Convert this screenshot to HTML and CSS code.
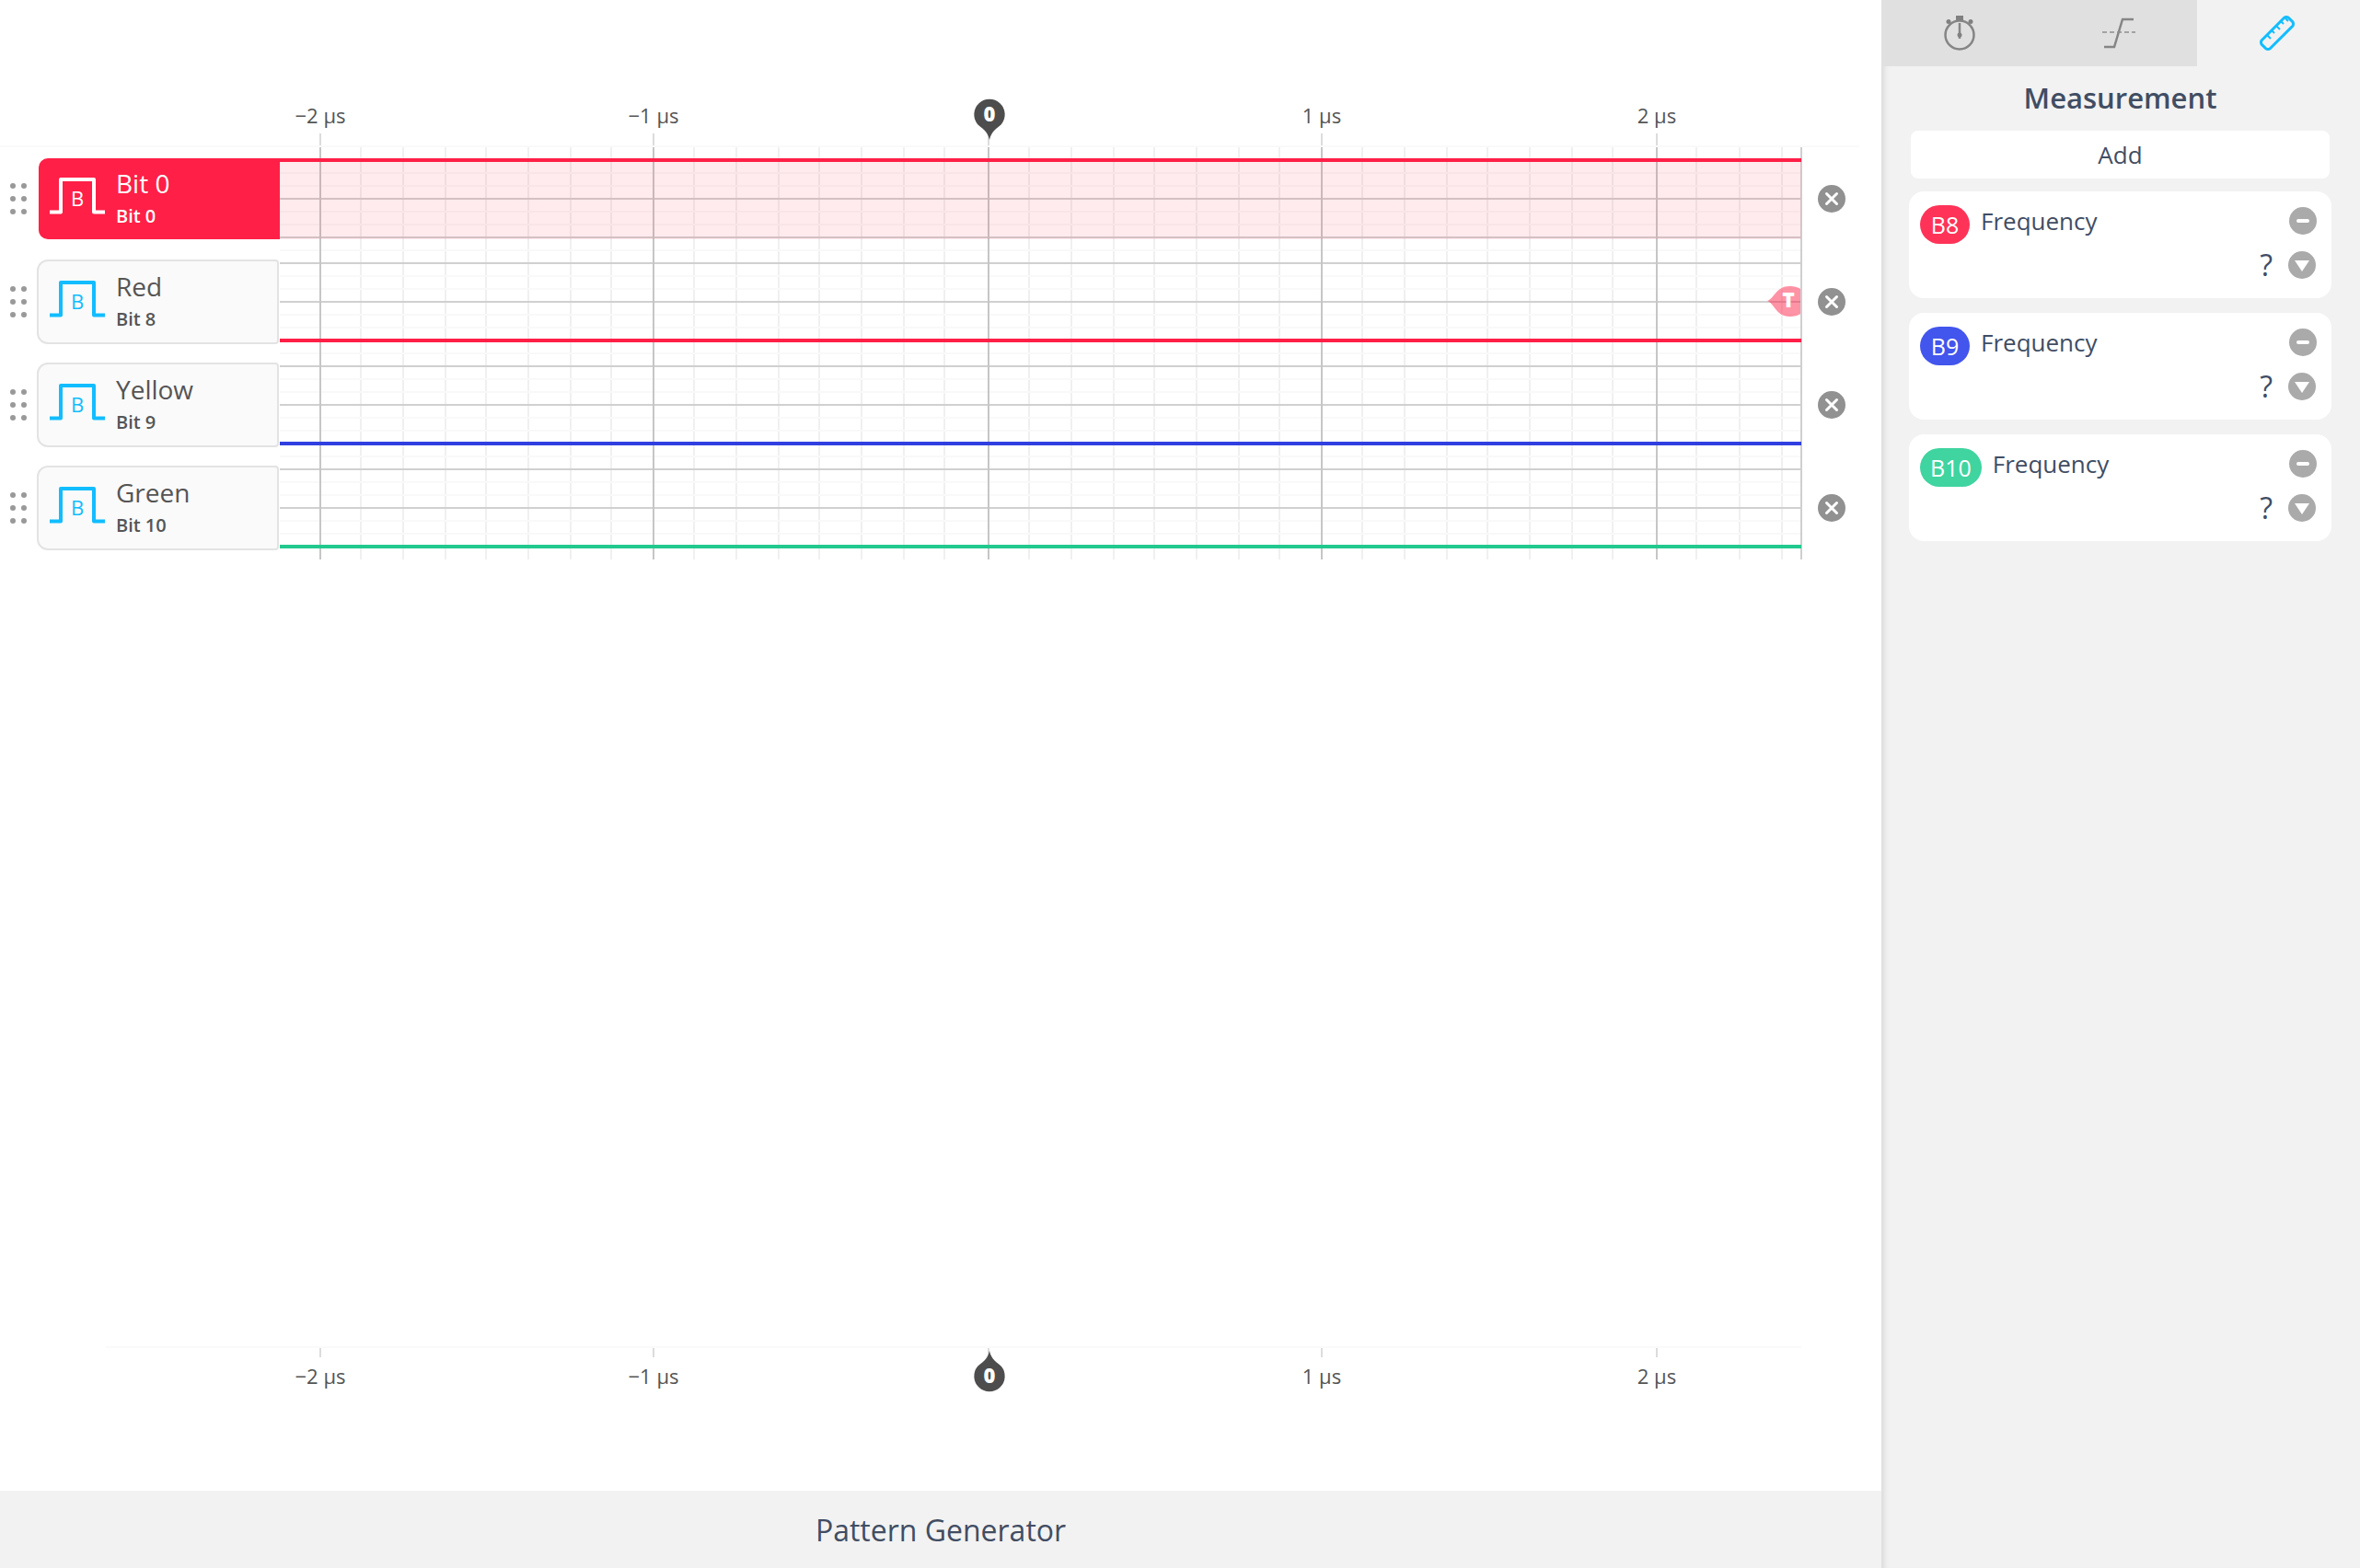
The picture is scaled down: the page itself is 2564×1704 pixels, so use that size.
FILE: index.html
```html
<!DOCTYPE html>
<html lang="en">
<head>
  <meta charset="UTF-8">
  <title>Pattern Generator</title>
  <link rel="stylesheet" href="styles.css">
</head>
<body>
  <div class="main">
    <div class="plot">
      <svg class="plot-canvas" width="2044" height="1620" viewBox="0 0 2044 1620">
        <path class="axis-line" d="M0 159H2020M115 1464H1957"/>
        <!-- ticks -->
        <path class="tick" d="M348 145V158M710 145V158M1074 145V158M1436 145V158M1800 145V158M348 1465V1475M710 1465V1475M1074 1465V1475M1436 1465V1475M1800 1465V1475"/>
        <!-- minor grid -->
        <path class="grid-minor" d="M392 160V608M438 160V608M484 160V608M528 160V608M574 160V608M620 160V608M664 160V608M754 160V608M800 160V608M846 160V608M890 160V608M936 160V608M982 160V608M1026 160V608M1118 160V608M1164 160V608M1210 160V608M1254 160V608M1300 160V608M1346 160V608M1390 160V608M1480 160V608M1526 160V608M1572 160V608M1616 160V608M1662 160V608M1708 160V608M1752 160V608M1843 160V608M1890 160V608M1936 160V608"/>
        <path class="grid-faint" d="M304 188H1957M304 202H1957M304 230H1957M304 244H1957M304 272H1957M304 300H1957M304 314H1957M304 342H1957M304 356H1957M304 384H1957M304 412H1957M304 426H1957M304 454H1957M304 468H1957M304 496H1957M304 524H1957M304 538H1957M304 566H1957M304 580H1957"/>
        <!-- major grid -->
        <path class="grid-major" d="M304 216H1957M304 258H1957M304 286H1957M304 328H1957M304 398H1957M304 440H1957M304 510H1957M304 552H1957"/>
        <path class="grid-axis" d="M348 160V608M710 160V608M1074 160V608M1436 160V608M1800 160V608"/>
        <path class="grid-edge" d="M1957 160V608"/>

        <!-- signals -->
        <rect class="signal-fill" x="304" y="176" width="1653" height="84"/>
        <path class="signal signal-red" d="M304 174H1957M304 370H1957"/>
        <path class="signal signal-blue" d="M304 482H1957"/>
        <path class="signal signal-green" d="M304 594H1957"/>

        <!-- axis labels -->
        <g class="axis-label">
          <text x="348" y="134">−2 μs</text>
          <text x="710" y="134">−1 μs</text>
          <text x="1436" y="134">1 μs</text>
          <text x="1800" y="134">2 μs</text>
          <text x="348" y="1504">−2 μs</text>
          <text x="710" y="1504">−1 μs</text>
          <text x="1436" y="1504">1 μs</text>
          <text x="1800" y="1504">2 μs</text>
        </g>

        <!-- cursors -->
        <path class="pin" d="M1075 152C1073 142 1066 139 1062 135A16.7 16.7 0 1 1 1088 135C1084 139 1077 142 1075 152Z"/>
        <text class="pin-text" x="1075" y="132">0</text>
        <path class="pin" d="M1075 1468C1073 1478 1066 1481 1062 1485A16.7 16.7 0 1 0 1088 1485C1084 1481 1077 1478 1075 1468Z"/>
        <text class="pin-text" x="1075" y="1503">0</text>

        <path class="trigger" d="M1920 327C1927 325 1930 311 1944 311C1950 311 1953 312 1956 314V341C1953 343 1950 344 1944 344C1930 344 1927 329 1920 327Z"/>
        <text class="trigger-text" x="1943" y="334">T</text>
      </svg>

      <div class="rows">
        <div class="row">
          <div class="handle"><i></i><i></i><i></i><i></i><i></i><i></i></div>
          <div class="channel channel-active">
            <svg class="channel-icon" width="60" height="40" viewBox="0 0 60 40">
              <path d="M0 37.500H12V2H48V37.500H60"/>
              <text x="30" y="31">B</text>
            </svg>
            <div class="channel-text">
              <div class="channel-name">Bit 0</div>
              <div class="channel-bit">Bit 0</div>
            </div>
          </div>
          <div class="trace"></div>
          <button class="close"><svg width="30" height="30" viewBox="0 0 30 30"><path d="M9.500 9.500L20.500 20.500M20.500 9.500L9.500 20.500"/></svg></button>
        </div>
        <div class="row">
          <div class="handle"><i></i><i></i><i></i><i></i><i></i><i></i></div>
          <div class="channel">
            <svg class="channel-icon" width="60" height="40" viewBox="0 0 60 40">
              <path d="M0 37.500H12V2H48V37.500H60"/>
              <text x="30" y="31">B</text>
            </svg>
            <div class="channel-text">
              <div class="channel-name">Red</div>
              <div class="channel-bit">Bit 8</div>
            </div>
          </div>
          <div class="trace"></div>
          <button class="close"><svg width="30" height="30" viewBox="0 0 30 30"><path d="M9.500 9.500L20.500 20.500M20.500 9.500L9.500 20.500"/></svg></button>
        </div>
        <div class="row">
          <div class="handle"><i></i><i></i><i></i><i></i><i></i><i></i></div>
          <div class="channel">
            <svg class="channel-icon" width="60" height="40" viewBox="0 0 60 40">
              <path d="M0 37.500H12V2H48V37.500H60"/>
              <text x="30" y="31">B</text>
            </svg>
            <div class="channel-text">
              <div class="channel-name">Yellow</div>
              <div class="channel-bit">Bit 9</div>
            </div>
          </div>
          <div class="trace"></div>
          <button class="close"><svg width="30" height="30" viewBox="0 0 30 30"><path d="M9.500 9.500L20.500 20.500M20.500 9.500L9.500 20.500"/></svg></button>
        </div>
        <div class="row">
          <div class="handle"><i></i><i></i><i></i><i></i><i></i><i></i></div>
          <div class="channel">
            <svg class="channel-icon" width="60" height="40" viewBox="0 0 60 40">
              <path d="M0 37.500H12V2H48V37.500H60"/>
              <text x="30" y="31">B</text>
            </svg>
            <div class="channel-text">
              <div class="channel-name">Green</div>
              <div class="channel-bit">Bit 10</div>
            </div>
          </div>
          <div class="trace"></div>
          <button class="close"><svg width="30" height="30" viewBox="0 0 30 30"><path d="M9.500 9.500L20.500 20.500M20.500 9.500L9.500 20.500"/></svg></button>
        </div>
      </div>
    </div>
    <div class="footer">Pattern Generator</div>
  </div>

  <div class="sidebar">
    <div class="tabs">
      <div class="tab tab-divided">
        <svg width="36" height="38" viewBox="0 0 36 38" class="tab-icon">
          <circle cx="18" cy="21" r="15.500"/>
          <path class="tab-fill" d="M14 0H22V5H14Z"/>
          <circle class="tab-fill" cx="6" cy="6.500" r="2.500"/>
          <circle class="tab-fill" cx="30" cy="6.500" r="2.500"/>
          <path class="tab-hand" d="M18 8V25"/>
          <circle class="tab-fill" cx="18" cy="21" r="2.500"/>
        </svg>
      </div>
      <div class="tab">
        <svg width="36" height="34" viewBox="0 0 36 34" class="tab-icon tab-edge">
          <path d="M2 32H13L22 2H34"/>
          <path class="tab-dash" d="M0 16H36"/>
        </svg>
      </div>
      <div class="tab tab-current">
        <svg width="38" height="38" viewBox="0 0 38 38" class="ruler">
          <path class="ruler-body" d="M2 27L27 2Q29 1 31 2L36 7Q37 9 36 11L11 36Q9 37 7 36L2 31Q1 29 2 27Z"/>
          <path class="ruler-ticks" d="M8 21L12 25M13 16L16 19M18 11L22 15M23 6L26 9M28 3L31 6"/>
        </svg>
      </div>
    </div>
    <div class="panel">
      <h2 class="panel-title">Measurement</h2>
      <button class="add">Add</button>

      <div class="measure">
        <div class="measure-top">
          <span class="badge badge-red">B8</span>
          <span class="measure-name">Frequency</span>
          <span class="round-btn round-minus"><i></i></span>
        </div>
        <div class="measure-bottom">
          <span class="measure-value">?</span>
          <span class="round-btn round-down"><i></i></span>
        </div>
      </div>
      <div class="measure">
        <div class="measure-top">
          <span class="badge badge-blue">B9</span>
          <span class="measure-name">Frequency</span>
          <span class="round-btn round-minus"><i></i></span>
        </div>
        <div class="measure-bottom">
          <span class="measure-value">?</span>
          <span class="round-btn round-down"><i></i></span>
        </div>
      </div>
      <div class="measure">
        <div class="measure-top">
          <span class="badge badge-green">B10</span>
          <span class="measure-name">Frequency</span>
          <span class="round-btn round-minus"><i></i></span>
        </div>
        <div class="measure-bottom">
          <span class="measure-value">?</span>
          <span class="round-btn round-down"><i></i></span>
        </div>
      </div>
    </div>
  </div>
</body>
</html>
```

FILE: styles.css
```css
* { margin: 0; padding: 0; box-sizing: border-box; }

html,
body { width: 100%; height: 100%; }

body {
  display: flex;
  overflow: hidden;
  background: #fff;
  font-family: "Open Sans", sans-serif;
  color: #414d63;
}

.main {
  width: 2044px;
  flex-shrink: 0;
  display: flex;
  flex-direction: column;
}

.plot {
  position: relative;
  flex: 1;
}
.plot-canvas {
  position: absolute;
  left: 0;
  top: 0;
}
.plot-canvas path { fill: none; }

.axis-line { stroke: #fafafa; stroke-width: 2; }
.tick { stroke: #dcdcdc; stroke-width: 2; }
.grid-minor { stroke: #f0f0f0; stroke-width: 2; }
.grid-faint { stroke: #f9f9f9; stroke-width: 2; }
.grid-major { stroke: #d0d0d0; stroke-width: 2; }
.grid-axis { stroke: #c6c6c6; stroke-width: 2; }
.grid-edge { stroke: #cfcfcf; stroke-width: 2; }

.signal-fill { fill: rgba(255, 30, 70, 0.09); }
.signal { stroke-width: 4; }
.signal-red { stroke: #ff1f47; }
.signal-blue { stroke: #2f3fe0; }
.signal-green { stroke: #22c98f; }

.axis-label text {
  font-size: 22px;
  fill: #555;
  text-anchor: middle;
}

.plot-canvas .pin { fill: #4d4d4d; }
.pin-text {
  font-size: 22px;
  font-weight: 800;
  fill: #fff;
  text-anchor: middle;
}

.plot-canvas .trigger { fill: rgba(255, 30, 70, 0.48); }
.trigger-text {
  font-size: 23px;
  font-weight: 800;
  fill: #fff;
  text-anchor: middle;
}

.rows {
  position: relative;
  display: flex;
  flex-direction: column;
  gap: 20px;
  padding-top: 170px;
  padding-left: 11px;
}
.row {
  display: flex;
  align-items: center;
  height: 92px;
}

.handle {
  display: grid;
  grid-template-columns: 6px 6px;
  grid-auto-rows: 6px;
  gap: 8px 6px;
  width: 29px;
  flex-shrink: 0;
}
.handle i {
  border-radius: 50%;
  background: #999;
}

.channel {
  width: 263px;
  height: 92px;
  flex-shrink: 0;
  margin-right: 1px;
  display: flex;
  align-items: flex-start;
  gap: 12px;
  padding: 21px 0 0 12px;
  background: #fafafa;
  border: 2px solid #e3e3e3;
  border-radius: 12px 4px 4px 12px;
  color: #555;
}
.channel-active {
  width: 262px;
  height: 88px;
  margin-left: 2px;
  margin-right: 0;
  padding: 21px 0 0 12px;
  background: #ff1f47;
  border: 0;
  border-radius: 10px 0 0 10px;
  color: #fff;
}
.channel-icon {
  flex-shrink: 0;
}
.channel-icon path {
  fill: none;
  stroke: #12bdff;
  stroke-width: 4;
  stroke-linejoin: round;
}
.channel-icon text {
  font-size: 22px;
  fill: #12bdff;
  text-anchor: middle;
}
.channel-active .channel-icon path { stroke: #fff; }
.channel-active .channel-icon text { fill: #fff; }

.channel-text {
  margin-top: -13px;
}
.channel-name {
  font-size: 28px;
  line-height: 38px;
}
.channel-bit {
  font-size: 20px;
  font-weight: 600;
  line-height: 30px;
  margin-top: 2px;
}

.trace {
  width: 1653px;
  flex-shrink: 0;
}

.close {
  width: 30px;
  height: 30px;
  margin-left: 18px;
  border: 0;
  border-radius: 50%;
  background: #919191;
  display: flex;
}
.close path {
  fill: none;
  stroke: #fff;
  stroke-width: 3;
  stroke-linecap: round;
}

.footer {
  height: 84px;
  flex-shrink: 0;
  background: #f2f2f2;
  display: flex;
  justify-content: center;
  align-items: center;
  font-size: 32px;
}

.sidebar {
  flex: 1;
  background: #f2f2f2;
  box-shadow: inset 8px 0 6px -5px rgba(0, 0, 0, 0.1);
}

.tabs {
  display: grid;
  grid-template-columns: 170px 173px 177px;
  height: 72px;
}
.tab {
  position: relative;
  display: flex;
  justify-content: center;
  align-items: center;
  background: #e0e0e0;
}
.tab-divided::after {
  content: "";
  position: absolute;
  right: -2px;
  top: 9px;
  width: 2px;
  height: 52px;
  background: #999;
}
.tab-current { background: #f2f2f2; }

.tab-edge { margin-left: 2px; }
.tab-icon circle,
.tab-icon path {
  fill: none;
  stroke: #858585;
  stroke-width: 2.500;
}
.tab-icon .tab-fill {
  fill: #808080;
  stroke: none;
}
.tab-icon .tab-dash {
  stroke: #8f8f8f;
  stroke-width: 1.500;
  stroke-dasharray: 5 3;
}

.ruler { margin-right: 3px; }
.ruler path {
  fill: none;
  stroke: #12bdff;
}
.ruler-body { stroke-width: 3; }
.ruler-ticks { stroke-width: 2; }

.panel {
  display: flex;
  flex-direction: column;
  align-items: center;
  padding: 0 31px 0 30px;
}
.panel-title {
  font-size: 31px;
  font-weight: 600;
  line-height: 40px;
  margin-top: 14px;
  margin-bottom: 16px;
}

.add {
  width: 455px;
  height: 52px;
  margin-bottom: 14px;
  border: 0;
  border-radius: 8px;
  background: #fff;
  font-family: inherit;
  font-size: 26px;
  color: #414d63;
}

.measure {
  width: 459px;
  height: 116px;
  margin-bottom: 16px;
  padding: 15px 17px 0 12px;
  border-radius: 16px;
  background: #fff;
}
.measure-top {
  display: flex;
  align-items: flex-start;
  height: 42px;
}
.badge {
  min-width: 54px;
  height: 42px;
  padding: 0 11px;
  border-radius: 21px;
  color: #fff;
  font-size: 25px;
  line-height: 42px;
  text-align: center;
}
.badge-red { background: #ff3358; }
.badge-blue { background: #4255ec; }
.badge-green { background: #3fd4a0; }

.measure-name {
  margin-left: 12px;
  font-size: 26px;
  line-height: 34px;
}

.round-btn {
  position: relative;
  width: 30px;
  height: 30px;
  border-radius: 50%;
  background: #aaa;
  flex-shrink: 0;
}
.round-minus {
  margin-left: auto;
  margin-top: 2px;
  margin-right: -1px;
}
.round-minus i {
  position: absolute;
  left: 8px;
  top: 13px;
  width: 14px;
  height: 4px;
  border-radius: 2px;
  background: #fff;
}
.round-down i {
  position: absolute;
  left: 7px;
  top: 10px;
  width: 0;
  height: 0;
  border-left: 8px solid transparent;
  border-right: 8px solid transparent;
  border-top: 12px solid #fff;
}

.measure-bottom {
  display: flex;
  justify-content: flex-end;
  align-items: center;
  gap: 17px;
  margin-top: 6px;
}
.measure-value {
  font-size: 32px;
  line-height: 34px;
}
```
